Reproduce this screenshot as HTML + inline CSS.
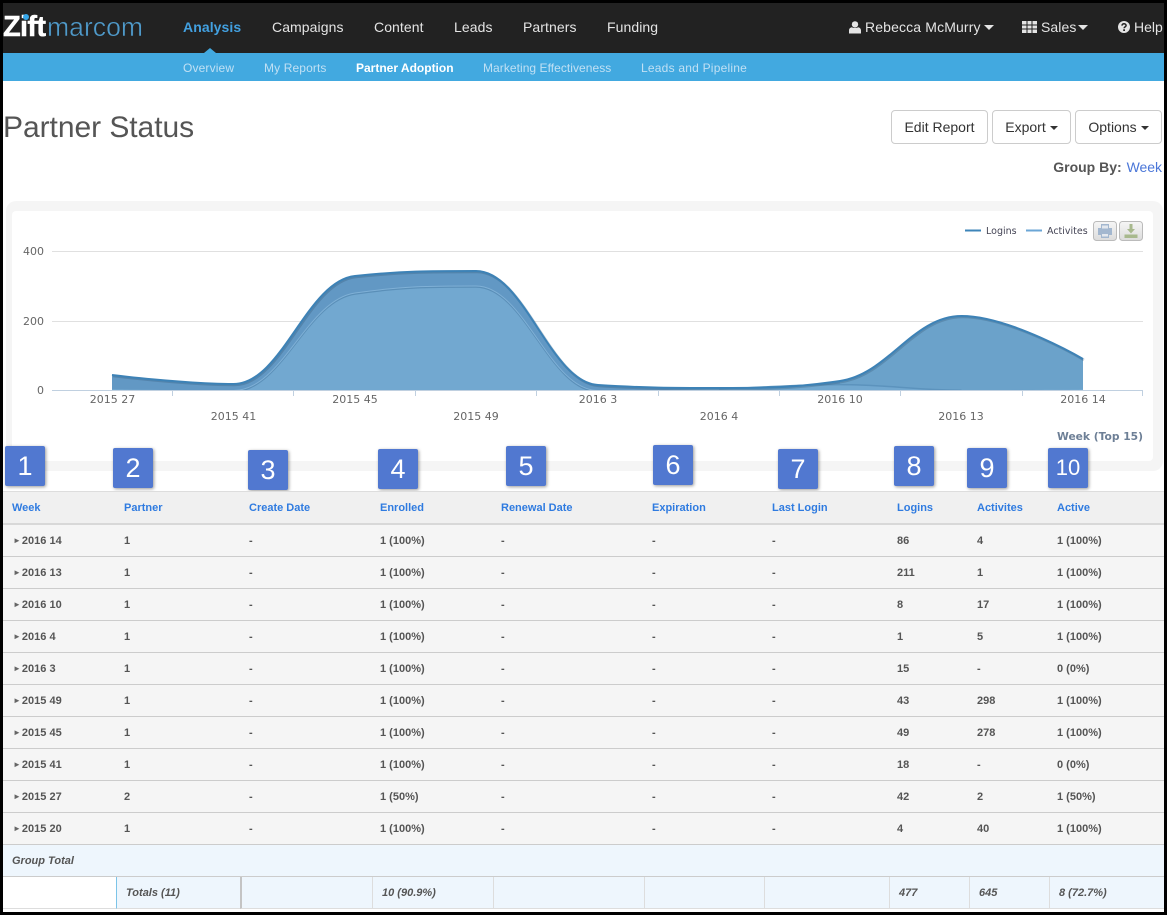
<!DOCTYPE html>
<html><head><meta charset="utf-8"><title>Partner Status</title>
<style>
html,body{margin:0;padding:0;background:#000}
#f{position:relative;width:1167px;height:915px;overflow:hidden;background:#000;font-family:"Liberation Sans",sans-serif}
#p{position:absolute;left:3px;top:3px;width:1161px;height:909px;background:#fff;overflow:hidden}
.a{position:absolute;white-space:nowrap}
#nav{position:absolute;left:3px;top:3px;width:1161px;height:50px;background:#222}
#sub{position:absolute;left:3px;top:53px;width:1161px;height:28px;background:#42a9e0}
.n{font-size:14px;color:#e4e4e4;line-height:16px;top:19px;letter-spacing:.08px}
.s{font-size:12px;color:#c0e0f4;line-height:14px;top:61px;letter-spacing:.08px}
.btn{position:absolute;top:110px;height:32px;border:1px solid #ccc;border-radius:4px;background:#fff;font-size:14px;color:#333;line-height:32px;text-align:center;box-sizing:content-box}
.c{display:inline-block;width:0;height:0;border-left:4px solid transparent;border-right:4px solid transparent;border-top:4px solid #333;vertical-align:middle;margin-left:4px}
.b{position:absolute;width:40px;height:40px;background:#5178d0;border-radius:2px;box-shadow:1px 1px 3px rgba(0,0,0,.4);color:#fff;font-size:27px;line-height:40px;text-align:center}
table{position:absolute;border-collapse:separate;border-spacing:0;table-layout:fixed;font-size:11px;font-weight:bold;color:#555}
td,th{padding:0 0 0 9px;text-align:left;white-space:nowrap;overflow:hidden;box-sizing:border-box}
th{height:34px;background:#f0f0f0;border-top:1px solid #ddd;border-bottom:2px solid #d8d8d8;color:#2f7be0;font-weight:bold}
td{height:32px;background:#f5f5f5;border-bottom:1px solid #ccc}
td u{text-decoration:none;font-size:8px;color:#666;margin:0 2px 0 1px;position:relative;top:-1px;letter-spacing:-1px}
.g td{background:#eef6fd;font-style:italic}
.t td{background:#eef6fd;font-style:italic;border-left:1px solid #ddd;border-bottom:1px solid #ddd}
svg text{font-family:"DejaVu Sans","Liberation Sans",sans-serif}
</style></head><body>
<div id="f">
<div id="p"></div>
<div id="nav"></div>
<div id="sub"></div>
<div class="a" style="left:3px;top:9px;font-size:29px;font-weight:bold;color:#fff;line-height:36px;letter-spacing:-.7px;-webkit-text-stroke:.5px #fff">Zift</div>
<div class="a" style="left:23px;top:14px;width:6px;height:6px;border-radius:50%;background:#36a6e8"></div>
<div class="a" style="left:47px;top:9px;font-size:26.6px;color:#4f9aca;line-height:36px;-webkit-text-stroke:.45px #222">marcom</div>
<div class="a" style="left:204px;top:48px;width:0;height:0;border-left:6px solid transparent;border-right:6px solid transparent;border-bottom:5px solid #42a9e0"></div>
<div class="a n" style="left:183px;font-weight:bold;color:#42a0e0">Analysis</div>
<div class="a n" style="left:272px">Campaigns</div>
<div class="a n" style="left:374px">Content</div>
<div class="a n" style="left:454px">Leads</div>
<div class="a n" style="left:523px">Partners</div>
<div class="a n" style="left:607px">Funding</div>
<svg class="a" style="left:849px;top:21px" width="12" height="13" viewBox="0 0 12 13"><circle cx="6" cy="3.4" r="3.2" fill="#e4e4e4"/><path d="M0 12.5V9.5C0 7.5 1.5 6.5 3 6.3 4 7.3 8 7.3 9 6.3 10.5 6.5 12 7.5 12 9.5V12.500Z" fill="#e4e4e4"/></svg>
<div class="a n" style="left:865px;letter-spacing:.14px">Rebecca McMurry</div>
<div class="a" style="left:984px;top:25px;width:0;height:0;border-left:5px solid transparent;border-right:5px solid transparent;border-top:5px solid #e4e4e4"></div>
<svg class="a" style="left:1022px;top:21px" width="15" height="12" viewBox="0 0 15 12"><path d="M0 0H15V12H0Z" fill="#e4e4e4"/><path d="M0 4H15M0 8H15M5 0V12M10 0V12" stroke="#222" stroke-width="1"/></svg>
<div class="a n" style="left:1041px">Sales</div>
<div class="a" style="left:1078px;top:25px;width:0;height:0;border-left:5px solid transparent;border-right:5px solid transparent;border-top:5px solid #e4e4e4"></div>
<svg class="a" style="left:1118px;top:21px" width="12" height="12" viewBox="0 0 12 12"><circle cx="6" cy="6" r="6" fill="#e4e4e4"/><path d="M4 4.600C4 3.400 5 2.800 6 2.800 7.200 2.800 8.100 3.500 8.100 4.500 8.100 5.800 6.100 5.900 6.100 7.200" fill="none" stroke="#222" stroke-width="1.500"/><path d="M5.200 8.300H7V10H5.200Z" fill="#222"/></svg>
<div class="a" style="left:1134px;top:19px;width:30px;overflow:hidden;font-size:14px;line-height:16px;color:#e4e4e4">Help</div>
<div class="a s" style="left:183px;letter-spacing:.14px">Overview</div>
<div class="a s" style="left:264px;letter-spacing:.12px">My Reports</div>
<div class="a s" style="left:356px;font-weight:bold;color:#fff;letter-spacing:0">Partner Adoption</div>
<div class="a s" style="left:483px;letter-spacing:.05px">Marketing Effectiveness</div>
<div class="a s" style="left:641px;letter-spacing:.22px">Leads and Pipeline</div>

<div class="a" style="left:3px;top:109px;font-size:30px;line-height:38px;color:#555;letter-spacing:-.05px">Partner Status</div>
<div class="btn" style="left:891px;width:95px">Edit Report</div>
<div class="btn" style="left:992px;width:77px">Export<span class="c"></span></div>
<div class="btn" style="left:1075px;width:85px">Options<span class="c"></span></div>
<div class="a" style="right:5px;top:159px;font-size:14px;line-height:16px;color:#555"><b>Group By:</b> <span style="color:#4a76d8;margin-left:1px;letter-spacing:-.03px">Week</span></div>

<div class="a" style="left:6px;top:201px;width:1157px;height:270px;background:#f5f5f5;border-radius:10px"></div>
<div class="a" style="left:12px;top:211px;width:1141px;height:250px;background:#fff;border-radius:4px"></div>

<svg class="a" style="left:0;top:200px" width="1167" height="250" viewBox="0 200 1167 250">
<path d="M52 251.500H1143M52 321.500H1143" stroke="#e0e0e0" stroke-width="1"/>
<path d="M112 375C112 375 185 384 233.500 384C282 384 306.500 281 355 276C403.500 271 427.500 271 476 271C524.500 271 549.500 382 598 385C646.500 388 670.500 388 719 388C767.500 388 791.500 388 840 381C888.500 374 913 316 961.500 316C1010 316 1083 359 1083 359V390.500H112Z" fill="#6298c4"/>
<path d="M112 389.300C112 389.300 185 390.500 233.500 390.500C282 390.500 306.500 300 355 293C403.500 286 427.500 286 476 286C524.500 286 549.500 390.500 598 390.500C646.500 390.500 670.500 389.900 719 388.700C767.500 387.500 791.500 384.600 840 384.600C888.500 384.600 913 390.200 961.500 390.200C1010 390.200 1083 389 1083 389V390.500H112Z" fill="#72a8d0"/>
<path d="M961.500 390.200C1010 390.200 1083 389 1083 389V359C1083 359 1010 316 961.500 316C913 316 888.500 374 840 381V384.600C888.500 384.600 913 390.200 961.500 390.200Z" fill="#6ba2ca"/>
<clipPath id="ab"><rect x="52" y="200" width="1091" height="190"/></clipPath>
<g clip-path="url(#ab)">
<path d="M233.500 391.500C282 391.500 306.500 301 355 294C403.500 287 427.500 287 476 287C524.500 287 549.500 391.500 598 391.500" fill="none" stroke="#5a8fb8" stroke-width="1.500"/>
<path d="M233.500 390.500C282 390.500 306.500 300 355 293C403.500 286 427.500 286 476 286C524.500 286 549.500 390.500 598 390.500" fill="none" stroke="#7fb0d6" stroke-width="1"/>
<path d="M719 388.700C767.500 387.500 791.500 384.600 840 384.600C888.500 384.600 913 390.200 961.500 390.200" fill="none" stroke="#5c93bd" stroke-width="1.500"/>
</g>
<path transform="translate(1 1)" d="M112 375C112 375 185 384 233.500 384C282 384 306.500 281 355 276C403.500 271 427.500 271 476 271C524.500 271 549.500 382 598 385C646.500 388 670.500 388 719 388C767.500 388 791.500 388 840 381C888.500 374 913 316 961.500 316C1010 316 1083 359 1083 359" fill="none" stroke="rgba(40,70,100,.25)" stroke-width="2.500"/>
<path d="M112 375C112 375 185 384 233.500 384C282 384 306.500 281 355 276C403.500 271 427.500 271 476 271C524.500 271 549.500 382 598 385C646.500 388 670.500 388 719 388C767.500 388 791.500 388 840 381C888.500 374 913 316 961.500 316C1010 316 1083 359 1083 359" fill="none" stroke="#3d82b6" stroke-width="2"/>
<path d="M52 390.500H1143M172.500 391V396M293.500 391V396M415.500 391V396M536.500 391V396M658.500 391V396M779.500 391V396M900.500 391V396M1022.500 391V396M1142.500 391V396" stroke="#c0d0e0" stroke-width="1" fill="none"/>
<g font-size="11" fill="#666" text-anchor="end"><text x="44" y="255">400</text><text x="44" y="325">200</text><text x="44" y="394">0</text></g>
<g font-size="11" fill="#666" text-anchor="middle">
<text x="112.500" y="403">2015 27</text><text x="233.500" y="420">2015 41</text><text x="355" y="403">2015 45</text><text x="476" y="420">2015 49</text><text x="598" y="403">2016 3</text><text x="719" y="420">2016 4</text><text x="840" y="403">2016 10</text><text x="961" y="420">2016 13</text><text x="1083" y="403">2016 14</text></g>
<text x="1143" y="440" font-size="10.700" font-weight="bold" fill="#6d7f96" text-anchor="end">Week (Top 15)</text>
<path d="M965 230.500H981" stroke="#3d85b9" stroke-width="2"/><path d="M1026 230.500H1042" stroke="#6ba6d6" stroke-width="2"/>
<g font-size="9.500" fill="#445"><text x="986" y="234">Logins</text><text x="1047" y="234">Activites</text></g>
<defs><linearGradient id="bg" x1="0" y1="0" x2="0" y2="1"><stop offset="0" stop-color="#f6f6f6"/><stop offset="1" stop-color="#dcdcdc"/></linearGradient></defs>
<rect x="1093.500" y="221.500" width="23" height="19" rx="3" fill="url(#bg)" stroke="#bbb"/>
<rect x="1119.500" y="221.500" width="23" height="19" rx="3" fill="url(#bg)" stroke="#bbb"/>
<path d="M1101 224H1109V228H1112V235H1109V238H1101V235H1098V228H1101Z" fill="#a3b7cf"/><path d="M1102 225.500H1108V228.500H1102ZM1102 234H1108V236.500H1102Z" fill="#e4e8ee"/>
<path d="M1129.500 224H1132.500V229H1135L1131 233.500 1127 229H1129.500ZM1124.500 234.500H1137.500V238H1124.500Z" fill="#a8b98e"/>
</svg>

<div class="b" style="left:5px;top:446px">1</div>
<div class="b" style="left:113px;top:448px">2</div>
<div class="b" style="left:248px;top:450px">3</div>
<div class="b" style="left:378px;top:449px">4</div>
<div class="b" style="left:506px;top:446px">5</div>
<div class="b" style="left:653px;top:445px">6</div>
<div class="b" style="left:778px;top:449px">7</div>
<div class="b" style="left:894px;top:446px">8</div>
<div class="b" style="left:967px;top:448px">9</div>
<div class="b" style="left:1048px;top:448px;font-size:22px">10</div>

<table style="left:3px;top:491px;width:1161px">
<colgroup><col style="width:112px"><col style="width:125px"><col style="width:131px"><col style="width:121px"><col style="width:151px"><col style="width:120px"><col style="width:125px"><col style="width:80px"><col style="width:80px"><col style="width:116px"></colgroup>
<tr><th>Week</th><th>Partner</th><th>Create Date</th><th>Enrolled</th><th>Renewal Date</th><th>Expiration</th><th>Last Login</th><th>Logins</th><th>Activites</th><th>Active</th></tr>
<tr><td><u>►</u>2016 14</td><td>1</td><td>-</td><td>1 (100%)</td><td>-</td><td>-</td><td>-</td><td>86</td><td>4</td><td>1 (100%)</td></tr>
<tr><td><u>►</u>2016 13</td><td>1</td><td>-</td><td>1 (100%)</td><td>-</td><td>-</td><td>-</td><td>211</td><td>1</td><td>1 (100%)</td></tr>
<tr><td><u>►</u>2016 10</td><td>1</td><td>-</td><td>1 (100%)</td><td>-</td><td>-</td><td>-</td><td>8</td><td>17</td><td>1 (100%)</td></tr>
<tr><td><u>►</u>2016 4</td><td>1</td><td>-</td><td>1 (100%)</td><td>-</td><td>-</td><td>-</td><td>1</td><td>5</td><td>1 (100%)</td></tr>
<tr><td><u>►</u>2016 3</td><td>1</td><td>-</td><td>1 (100%)</td><td>-</td><td>-</td><td>-</td><td>15</td><td>-</td><td>0 (0%)</td></tr>
<tr><td><u>►</u>2015 49</td><td>1</td><td>-</td><td>1 (100%)</td><td>-</td><td>-</td><td>-</td><td>43</td><td>298</td><td>1 (100%)</td></tr>
<tr><td><u>►</u>2015 45</td><td>1</td><td>-</td><td>1 (100%)</td><td>-</td><td>-</td><td>-</td><td>49</td><td>278</td><td>1 (100%)</td></tr>
<tr><td><u>►</u>2015 41</td><td>1</td><td>-</td><td>1 (100%)</td><td>-</td><td>-</td><td>-</td><td>18</td><td>-</td><td>0 (0%)</td></tr>
<tr><td><u>►</u>2015 27</td><td>2</td><td>-</td><td>1 (50%)</td><td>-</td><td>-</td><td>-</td><td>42</td><td>2</td><td>1 (50%)</td></tr>
<tr><td><u>►</u>2015 20</td><td>1</td><td>-</td><td>1 (100%)</td><td>-</td><td>-</td><td>-</td><td>4</td><td>40</td><td>1 (100%)</td></tr>
<tr class="g"><td colspan="10" style="border-bottom-color:#ccc">Group Total</td></tr>
</table>
<table class="t" style="left:3px;top:877px;width:1161px">
<colgroup><col style="width:113px"><col style="width:124px"><col style="width:132px"><col style="width:121px"><col style="width:151px"><col style="width:120px"><col style="width:125px"><col style="width:80px"><col style="width:80px"><col style="width:115px"></colgroup>
<tr class="t"><td style="background:#fff;border-left:0"></td><td style="border-left-color:#7cc4e8">Totals (11)</td><td style="border-left:2px solid #c4c4c4"></td><td>10 (90.9%)</td><td></td><td></td><td></td><td>477</td><td>645</td><td>8 (72.7%)</td></tr>
</table>
</div>
</body></html>
